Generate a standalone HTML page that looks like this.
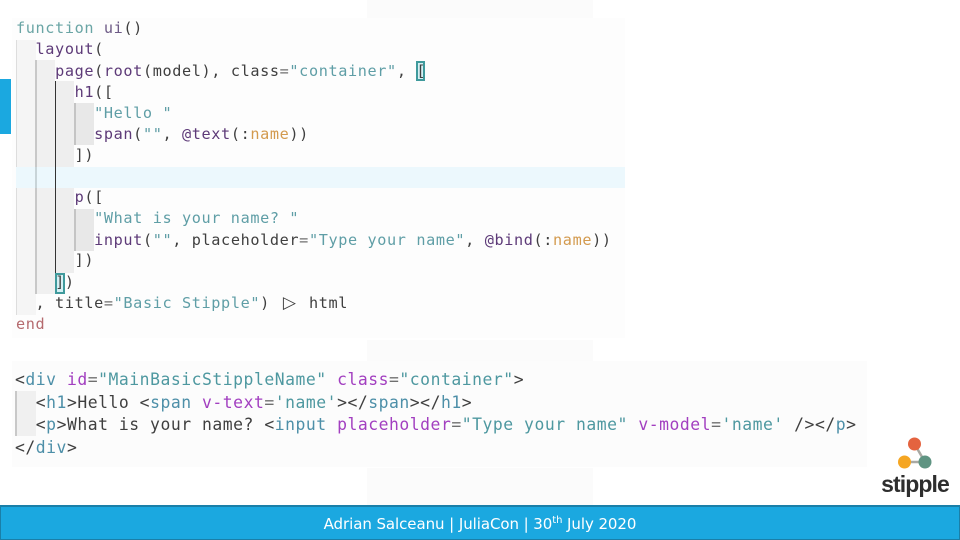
<!DOCTYPE html>
<html><head><meta charset="utf-8">
<style>
html,body{margin:0;padding:0;background:#fff}
#p{position:relative;width:960px;height:540px;overflow:hidden;background:#fff}
#p div{position:absolute}
.l,.m{white-space:pre;font-family:"DejaVu Sans Mono","Liberation Mono",monospace;color:#444}
.l{left:16px;font-size:15.2px;letter-spacing:.62px;line-height:21px;height:21px}
.m{left:15px;font-size:16.4px;letter-spacing:.52px;line-height:22px;height:22px}
.s{color:#5f9ea6}.f{color:#5d3a78}.y{color:#d39a4e}.k{color:#b56a6e}.t{color:#6aa5a5}
.g{color:#4d8fa8}.a{color:#a23fc0}.q{color:#4e98a0}.c{color:#3f3f3f}.v{color:#6f6f6f}
.u{color:#6d5a86}
.r{display:inline-block;width:19.6px;letter-spacing:0;text-align:center;font:17px/0 "DejaVu Sans",sans-serif;color:#3f3f3f}
</style></head><body><div id="p">
<div style="left:367px;top:0;width:226px;height:18px;background:#fbfbfb"></div>
<div style="left:367px;top:340px;width:226px;height:21px;background:#fbfbfb"></div>
<div style="left:367px;top:468px;width:226px;height:37px;background:#fbfbfb"></div>
<div style="left:12px;top:18px;width:613px;height:320px;background:#fdfdfd"></div>
<div style="left:12px;top:361px;width:855px;height:106px;background:#fcfcfc"></div>
<div style="left:16px;top:40px;width:20px;height:275px;background:#f5f5f5;border-left:1px solid #ddd;box-sizing:border-box"></div>
<div style="left:35px;top:60px;width:20px;height:234px;background:#f0f0f0;border-left:2px solid #c8c8c8;box-sizing:border-box"></div>
<div style="left:55px;top:81px;width:19px;height:192px;background:#eeeeee;border-left:1px solid #333;box-sizing:border-box"></div>
<div style="left:74px;top:103px;width:20px;height:42px;background:#e8e8e8;border-left:2px solid #c4c4c4;box-sizing:border-box"></div>
<div style="left:74px;top:209px;width:20px;height:42px;background:#e8e8e8;border-left:2px solid #c4c4c4;box-sizing:border-box"></div>
<div style="left:16px;top:167px;width:609px;height:21px;background:#ecf8fd"></div>
<div style="left:35px;top:167px;width:2px;height:21px;background:#c8d4d8"></div>
<div style="left:55px;top:167px;width:1px;height:21px;background:#333"></div>
<div style="left:416px;top:61px;width:9px;height:20px;background:#d4f0f4;border:2px solid #3f9a9c;box-sizing:border-box"></div>
<div style="left:55px;top:273px;width:10px;height:21px;background:#d4f0f4;border:2px solid #3f9a9c;box-sizing:border-box"></div>
<div style="left:0;top:79px;width:11px;height:55px;background:#1ba8e0"></div>

<div class="l" style="top:18px"><span class="t">function</span> <span class="u">ui</span><span class="c">()</span></div>
<div class="l" style="top:39px">  <span class="f">layout</span><span class="c">(</span></div>
<div class="l" style="top:60.500px">    <span class="f">page</span><span class="c">(</span><span class="f">root</span><span class="c">(model), class</span><span class="v">=</span><span class="s">"container"</span><span class="c">, [</span></div>
<div class="l" style="top:81.500px">      <span class="f">h1</span><span class="c">([</span></div>
<div class="l" style="top:102.5px">        <span class="s">"Hello "</span></div>
<div class="l" style="top:123.5px">        <span class="f">span</span><span class="c">(</span><span class="s">""</span><span class="c">, </span><span class="f">@text</span><span class="c">(:</span><span class="y">name</span><span class="c">))</span></div>
<div class="l" style="top:144.5px">      <span class="c">])</span></div>
<div class="l" style="top:187px">      <span class="f">p</span><span class="c">([</span></div>
<div class="l" style="top:208px">        <span class="s">"What is your name? "</span></div>
<div class="l" style="top:229.500px">        <span class="f">input</span><span class="c">(</span><span class="s">""</span><span class="c">, placeholder</span><span class="v">=</span><span class="s">"Type your name"</span><span class="c">, </span><span class="f">@bind</span><span class="c">(:</span><span class="y">name</span><span class="c">))</span></div>
<div class="l" style="top:250px">      <span class="c">])</span></div>
<div class="l" style="top:271.5px">    <span class="c">])</span></div>
<div class="l" style="top:292.5px">  <span class="c">, title</span><span class="v">=</span><span class="s">"Basic Stipple"</span><span class="c">) <span class="r">▷</span> html</span></div>
<div class="l" style="top:313.5px"><span class="k">end</span></div>

<div style="left:15px;top:391px;width:21px;height:45px;background:#f0f0f0;border-left:2px solid #c8c8c8;box-sizing:border-box"></div>
<div class="m" style="top:369px"><span class="c">&lt;</span><span class="g">div</span> <span class="a">id</span><span class="v">=</span><span class="q">"MainBasicStippleName"</span> <span class="a">class</span><span class="v">=</span><span class="q">"container"</span><span class="c">&gt;</span></div>
<div class="m" style="top:391.5px">  <span class="c">&lt;</span><span class="g">h1</span><span class="c">&gt;Hello &lt;</span><span class="g">span</span> <span class="a">v-text</span><span class="v">=</span><span class="q">'name'</span><span class="c">&gt;&lt;/</span><span class="g">span</span><span class="c">&gt;&lt;/</span><span class="g">h1</span><span class="c">&gt;</span></div>
<div class="m" style="top:414px">  <span class="c">&lt;</span><span class="g">p</span><span class="c">&gt;What is your name? &lt;</span><span class="g">input</span> <span class="a">placeholder</span><span class="v">=</span><span class="q">"Type your name"</span> <span class="a">v-model</span><span class="v">=</span><span class="q">'name'</span> <span class="c">/&gt;&lt;/</span><span class="g">p</span><span class="c">&gt;</span></div>
<div class="m" style="top:436.5px"><span class="c">&lt;/</span><span class="g">div</span><span class="c">&gt;</span></div>

<svg style="position:absolute;left:870px;top:430px" width="90" height="45" viewBox="0 0 90 45">
<path d="M44.500 14 L55 32 L34 32" fill="none" stroke="#a9a9a3" stroke-width="2.500"/>
<circle cx="44.500" cy="14" r="6.500" fill="#e4633f"/>
<circle cx="34.500" cy="32" r="6.500" fill="#f5a623"/>
<circle cx="55" cy="32" r="6.500" fill="#5f9482"/>
</svg>
<div style="left:880px;top:468px;width:70px;height:32px;font:bold 23px/32px 'Liberation Sans',sans-serif;letter-spacing:-.9px;color:#2e2e2e;white-space:pre;text-align:center">stipple</div>

<div style="left:0;top:505px;width:960px;height:35px;background:#1ba8e0;border:1px solid #1a7fa8;border-top-width:2px;box-sizing:border-box"></div>
<div style="left:0;top:514px;width:960px;height:20px;text-align:center;font:15px/20px 'DejaVu Sans','Liberation Sans',sans-serif;letter-spacing:-.07px;color:#fff;white-space:pre">Adrian Salceanu | JuliaCon | 30<sup style="font-size:10px;line-height:0">th</sup> July 2020</div>
</div></body></html>
